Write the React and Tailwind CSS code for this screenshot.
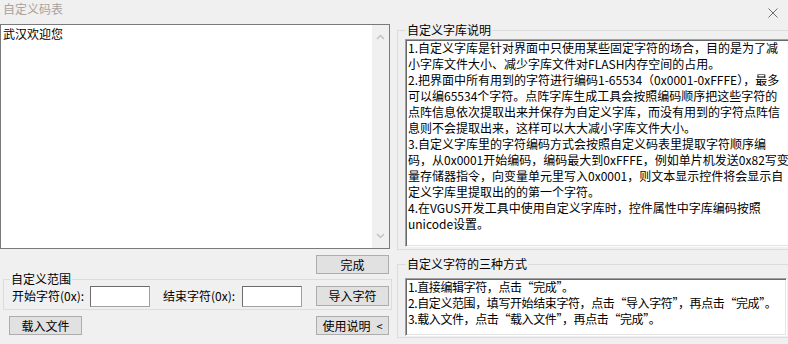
import React from "react";

function Btn({ children, className = "" }) {
  return (
    <div
      className={
        "h-[19px] w-[73px] shrink-0 border border-[#adadad] bg-[#e1e1e1] flex items-center justify-center leading-[12px] " +
        className
      }
    >
      {children}
    </div>
  );
}

function Sunken({ className = "", children }) {
  return (
    <div
      className={
        "bg-white border border-t-[#a0a0a0] border-l-[#a0a0a0] border-r-white border-b-white shadow-[inset_1px_1px_0_#696969,inset_-1px_-1px_0_#e3e3e3] " +
        className
      }
    >
      {children}
    </div>
  );
}

function Chevron({ up }) {
  return (
    <svg width="9" height="6" viewBox="0 0 9 6">
      <path
        d={up ? "M1 5 L4.5 1.5 L8 5" : "M1 1 L4.5 4.5 L8 1"}
        fill="none"
        stroke="#c2c2c2"
        strokeWidth="1.5"
      />
    </svg>
  );
}

export default function App() {
  const lines1 = [
    "1.自定义字库是针对界面中只使用某些固定字符的场合，目的是为了减",
    "小字库文件大小、减少字库文件对FLASH内存空间的占用。",
    "2.把界面中所有用到的字符进行编码1-65534（0x0001-0xFFFE），最多",
    "可以编65534个字符。点阵字库生成工具会按照编码顺序把这些字符的",
    "点阵信息依次提取出来并保存为自定义字库，而没有用到的字符点阵信",
    "息则不会提取出来，这样可以大大减小字库文件大小。",
    "3.自定义字库里的字符编码方式会按照自定义码表里提取字符顺序编",
    "码，从0x0001开始编码，编码最大到0xFFFE，例如单片机发送0x82写变",
    "量存储器指令，向变量单元里写入0x0001，则文本显示控件将会显示自",
    "定义字库里提取出的的第一个字符。",
    "4.在VGUS开发工具中使用自定义字库时，控件属性中字库编码按照",
    "unicode设置。",
  ];
  const lines2 = [
    "1.直接编辑字符，点击“完成”。",
    "2.自定义范围，填写开始结束字符，点击“导入字符”，再点击“完成”。",
    "3.载入文件，点击“载入文件”，再点击“完成”。",
  ];
  return (
    <div className="w-[788px] h-[344px] bg-[#f0f0f0] overflow-hidden font-['Noto_Sans_CJK_SC','Noto_Sans',sans-serif] text-[12px] leading-[16px] text-black">
      <div className="h-[24px] flex items-start justify-between pl-[3px] pr-[10px] pt-[3px]">
        <span className="text-[#aaa29c] leading-[12px]">自定义码表</span>
        <svg width="10" height="10" viewBox="0 0 10 10" className="mt-[5px]">
          <path d="M0.5 0.5 L9.5 9.5 M9.5 0.5 L0.5 9.5" stroke="#6e6e6e" strokeWidth="1" />
        </svg>
      </div>
      <div className="flex">
        {/* left column */}
        <div className="w-[390px] shrink-0">
          <div className="h-[225px] border border-[#7a7a7a] bg-white flex">
            <div className="flex-1 pl-[2px] pt-[1px]">武汉欢迎您</div>
            <div className="w-[17px] bg-[#f0f0f0] flex flex-col justify-between items-center py-[9px]">
              <Chevron up />
              <Chevron />
            </div>
          </div>
          <div className="mt-[6px] flex justify-end pr-[1px]">
            <Btn>完成</Btn>
          </div>
          <fieldset className="ml-[3px] w-[389px] mt-[-1px] border border-[#dcdcdc] pl-[8px] pr-[2px] pb-[2px]">
            <legend className="ml-[-2px] px-[1px] leading-[12px]">自定义范围</legend>
            <div className="flex items-center h-[22px]">
              <span className="w-[78px] shrink-0 whitespace-nowrap">开始字符(0x):</span>
              <div className="w-[60px] h-[21px] bg-white border border-t-[#6d6d6d] border-l-[#6d6d6d] border-r-[#a0a0a0] border-b-[#a0a0a0]" />
              <span className="ml-[13px] w-[79px] shrink-0 whitespace-nowrap">结束字符(0x):</span>
              <div className="w-[60px] h-[21px] bg-white border border-t-[#6d6d6d] border-l-[#6d6d6d] border-r-[#a0a0a0] border-b-[#a0a0a0]" />
              <Btn className="ml-[14px] h-[20px]">导入字符</Btn>
            </div>
          </fieldset>
          <div className="mt-[6px] flex justify-between pl-[9px] pr-[1px]">
            <Btn>载入文件</Btn>
            <Btn>
              <span>使用说明</span>
              <span className="ml-[6px] text-[11px]">&lt;</span>
            </Btn>
          </div>
        </div>
        {/* right column */}
        <div className="ml-[7px] w-[396px] shrink-0">
          <fieldset className="border border-[#dcdcdc] pl-[7px] pr-[5px] pt-[3px] pb-[2px]">
            <legend className="ml-[1px] px-[1px] leading-[12px]">自定义字库说明</legend>
            <Sunken className="h-[208px] pl-[2px]">
              {lines1.map((l, i) => (
                <div key={i} className="whitespace-nowrap">
                  {l}
                </div>
              ))}
            </Sunken>
          </fieldset>
          <fieldset className="mt-[8px] border border-[#dcdcdc] pl-[7px] pr-[5px] pt-[8px] pb-[1px]">
            <legend className="ml-[1px] px-[1px] leading-[12px]">自定义字符的三种方式</legend>
            <Sunken className="h-[58px] pl-[2px]">
              {lines2.map((l, i) => (
                <div key={i} className="whitespace-nowrap tracking-[-0.4px]">
                  {l}
                </div>
              ))}
            </Sunken>
          </fieldset>
        </div>
      </div>
    </div>
  );
}
